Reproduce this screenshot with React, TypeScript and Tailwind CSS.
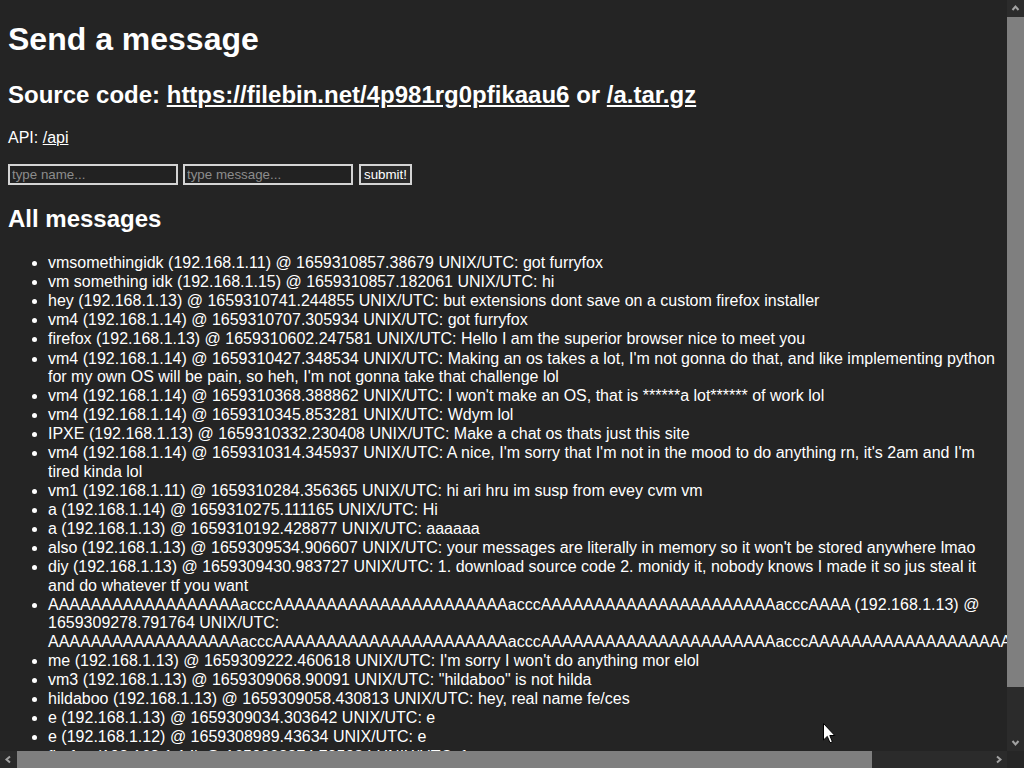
import React from "react";

type Message = {
  name: string;
  ip: string;
  ts: string;
  text: string;
};

const LONG_NAME =
  "A".repeat(18) + "accc" + "A".repeat(22) + "accc" + "A".repeat(22) + "accc" + "AAAA";
const LONG_TEXT =
  "A".repeat(18) + "accc" + "A".repeat(22) + "accc" + "A".repeat(22) + "accc" + "A".repeat(32);

const MESSAGES: Message[] = [
  { name: "vmsomethingidk", ip: "192.168.1.11", ts: "1659310857.38679", text: "got furryfox" },
  { name: "vm something idk", ip: "192.168.1.15", ts: "1659310857.182061", text: "hi" },
  { name: "hey", ip: "192.168.1.13", ts: "1659310741.244855", text: "but extensions dont save on a custom firefox installer" },
  { name: "vm4", ip: "192.168.1.14", ts: "1659310707.305934", text: "got furryfox" },
  { name: "firefox", ip: "192.168.1.13", ts: "1659310602.247581", text: "Hello I am the superior browser nice to meet you" },
  {
    name: "vm4",
    ip: "192.168.1.14",
    ts: "1659310427.348534",
    text: "Making an os takes a lot, I'm not gonna do that, and like implementing python for my own OS will be pain, so heh, I'm not gonna take that challenge lol",
  },
  { name: "vm4", ip: "192.168.1.14", ts: "1659310368.388862", text: "I won't make an OS, that is ******a lot****** of work lol" },
  { name: "vm4", ip: "192.168.1.14", ts: "1659310345.853281", text: "Wdym lol" },
  { name: "IPXE", ip: "192.168.1.13", ts: "1659310332.230408", text: "Make a chat os thats just this site" },
  {
    name: "vm4",
    ip: "192.168.1.14",
    ts: "1659310314.345937",
    text: "A nice, I'm sorry that I'm not in the mood to do anything rn, it's 2am and I'm tired kinda lol",
  },
  { name: "vm1", ip: "192.168.1.11", ts: "1659310284.356365", text: "hi ari hru im susp from evey cvm vm" },
  { name: "a", ip: "192.168.1.14", ts: "1659310275.111165", text: "Hi" },
  { name: "a", ip: "192.168.1.13", ts: "1659310192.428877", text: "aaaaaa" },
  {
    name: "also",
    ip: "192.168.1.13",
    ts: "1659309534.906607",
    text: "your messages are literally in memory so it won't be stored anywhere lmao",
  },
  {
    name: "diy",
    ip: "192.168.1.13",
    ts: "1659309430.983727",
    text: "1. download source code 2. monidy it, nobody knows I made it so jus steal it and do whatever tf you want",
  },
  { name: LONG_NAME, ip: "192.168.1.13", ts: "1659309278.791764", text: LONG_TEXT },
  { name: "me", ip: "192.168.1.13", ts: "1659309222.460618", text: "I'm sorry I won't do anything mor elol" },
  { name: "vm3", ip: "192.168.1.13", ts: "1659309068.90091", text: '"hildaboo" is not hilda' },
  { name: "hildaboo", ip: "192.168.1.13", ts: "1659309058.430813", text: "hey, real name fe/ces" },
  { name: "e", ip: "192.168.1.13", ts: "1659309034.303642", text: "e" },
  { name: "e", ip: "192.168.1.12", ts: "1659308989.43634", text: "e" },
  { name: "firefox", ip: "192.168.1.14", ts: "1659308874.735984", text: "f" },
  { name: "f", ip: "192.168.1.11", ts: "1659308850.118204", text: "f" },
];

function Chevron({ dir }: { dir: "up" | "down" | "left" | "right" }) {
  const points = {
    up: "1.5,6 4.5,2.5 7.5,6",
    down: "1.5,3 4.5,6.5 7.5,3",
    left: "6,1.5 2.5,4.5 6,7.5",
    right: "3,1.5 6.5,4.5 3,7.5",
  }[dir];
  return (
    <svg width="9" height="9" viewBox="0 0 9 9" fill="none">
      <polyline points={points} stroke="#a3a3a3" strokeWidth="2" strokeLinejoin="miter" />
    </svg>
  );
}

export default function App() {
  return (
    <div className="flex h-[768px] w-[1024px] flex-col overflow-hidden bg-[#242424] font-['Liberation_Sans',Arial,sans-serif] text-white">
      <div className="flex h-[751px]">
        <div className="relative w-[1007px] overflow-hidden px-2">
          <h1 className="my-[21.44px] text-[32px] font-bold leading-[36.8px]">Send a message</h1>
          <h2 className="mb-[21px] mt-[22.4px] text-[24px] font-bold leading-[27.6px]">
            Source code:{" "}
            <a href="#" className="underline">
              https://filebin.net/4p981rg0pfikaau6
            </a>{" "}
            or{" "}
            <a href="#" className="underline">
              /a.tar.gz
            </a>
          </h2>
          <p className="my-4 text-[16px] leading-[18.4px]">
            API:{" "}
            <a href="#" className="underline">
              /api
            </a>
          </p>
          <form className="flex h-[21.8px] items-start" onSubmit={(e) => e.preventDefault()}>
            <input
              type="text"
              placeholder="type name..."
              className="h-[21px] w-[170px] border-2 border-[#d4d4d4] bg-[#222222] px-[2px] text-[13.33px] leading-[15px] text-white outline-none placeholder:text-[#8c8c8c]"
            />
            <input
              type="text"
              placeholder="type message..."
              className="ml-[5px] h-[21px] w-[170px] border-2 border-[#d4d4d4] bg-[#222222] px-[2px] text-[13.33px] leading-[15px] text-white outline-none placeholder:text-[#8c8c8c]"
            />
            <button
              type="submit"
              className="ml-[6px] h-[21.7px] w-[53px] border-2 border-[#d4d4d4] bg-[#2a2a2a] text-center text-[13.33px] leading-[15px] text-white"
            >
              submit!
            </button>
          </form>
          <h2 className="my-[19.92px] text-[24px] font-bold leading-[27.6px]">All messages</h2>
          <ul className="mb-4 mt-[21px] list-disc pl-[40px] text-[16px] leading-[18.4px]">
            {MESSAGES.map((m, i) => (
              <li key={i} className="mb-[0.72px]">
                {m.name} ({m.ip}) @ {m.ts} UNIX/UTC: {m.text}
              </li>
            ))}
          </ul>
          <svg
            className="absolute left-[823px] top-[723px]"
            width="13"
            height="21"
            viewBox="0 0 13 21"
          >
            <path d="M0.5 0.5 L0.5 17 L4.3 13.4 L7 19.8 L9.4 18.8 L6.8 12.5 L11.8 12.5 Z" fill="#fff" stroke="#000" strokeWidth="1" />
          </svg>
        </div>
        <div className="flex w-[17px] flex-col bg-[#2b2b2b]">
          <div className="flex h-[17px] items-center justify-center">
            <Chevron dir="up" />
          </div>
          <div className="h-[670px] bg-[#7f7f7f]" />
          <div className="flex-1" />
          <div className="flex h-[17px] items-center justify-center">
            <Chevron dir="down" />
          </div>
        </div>
      </div>
      <div className="flex h-[17px]">
        <div className="flex w-[1007px] bg-[#2b2b2b]">
          <div className="flex w-[17px] items-center justify-center">
            <Chevron dir="left" />
          </div>
          <div className="w-[855px] bg-[#7f7f7f]" />
          <div className="flex-1" />
          <div className="flex w-[17px] items-center justify-center">
            <Chevron dir="right" />
          </div>
        </div>
        <div className="w-[17px] bg-[#262626]" />
      </div>
    </div>
  );
}
